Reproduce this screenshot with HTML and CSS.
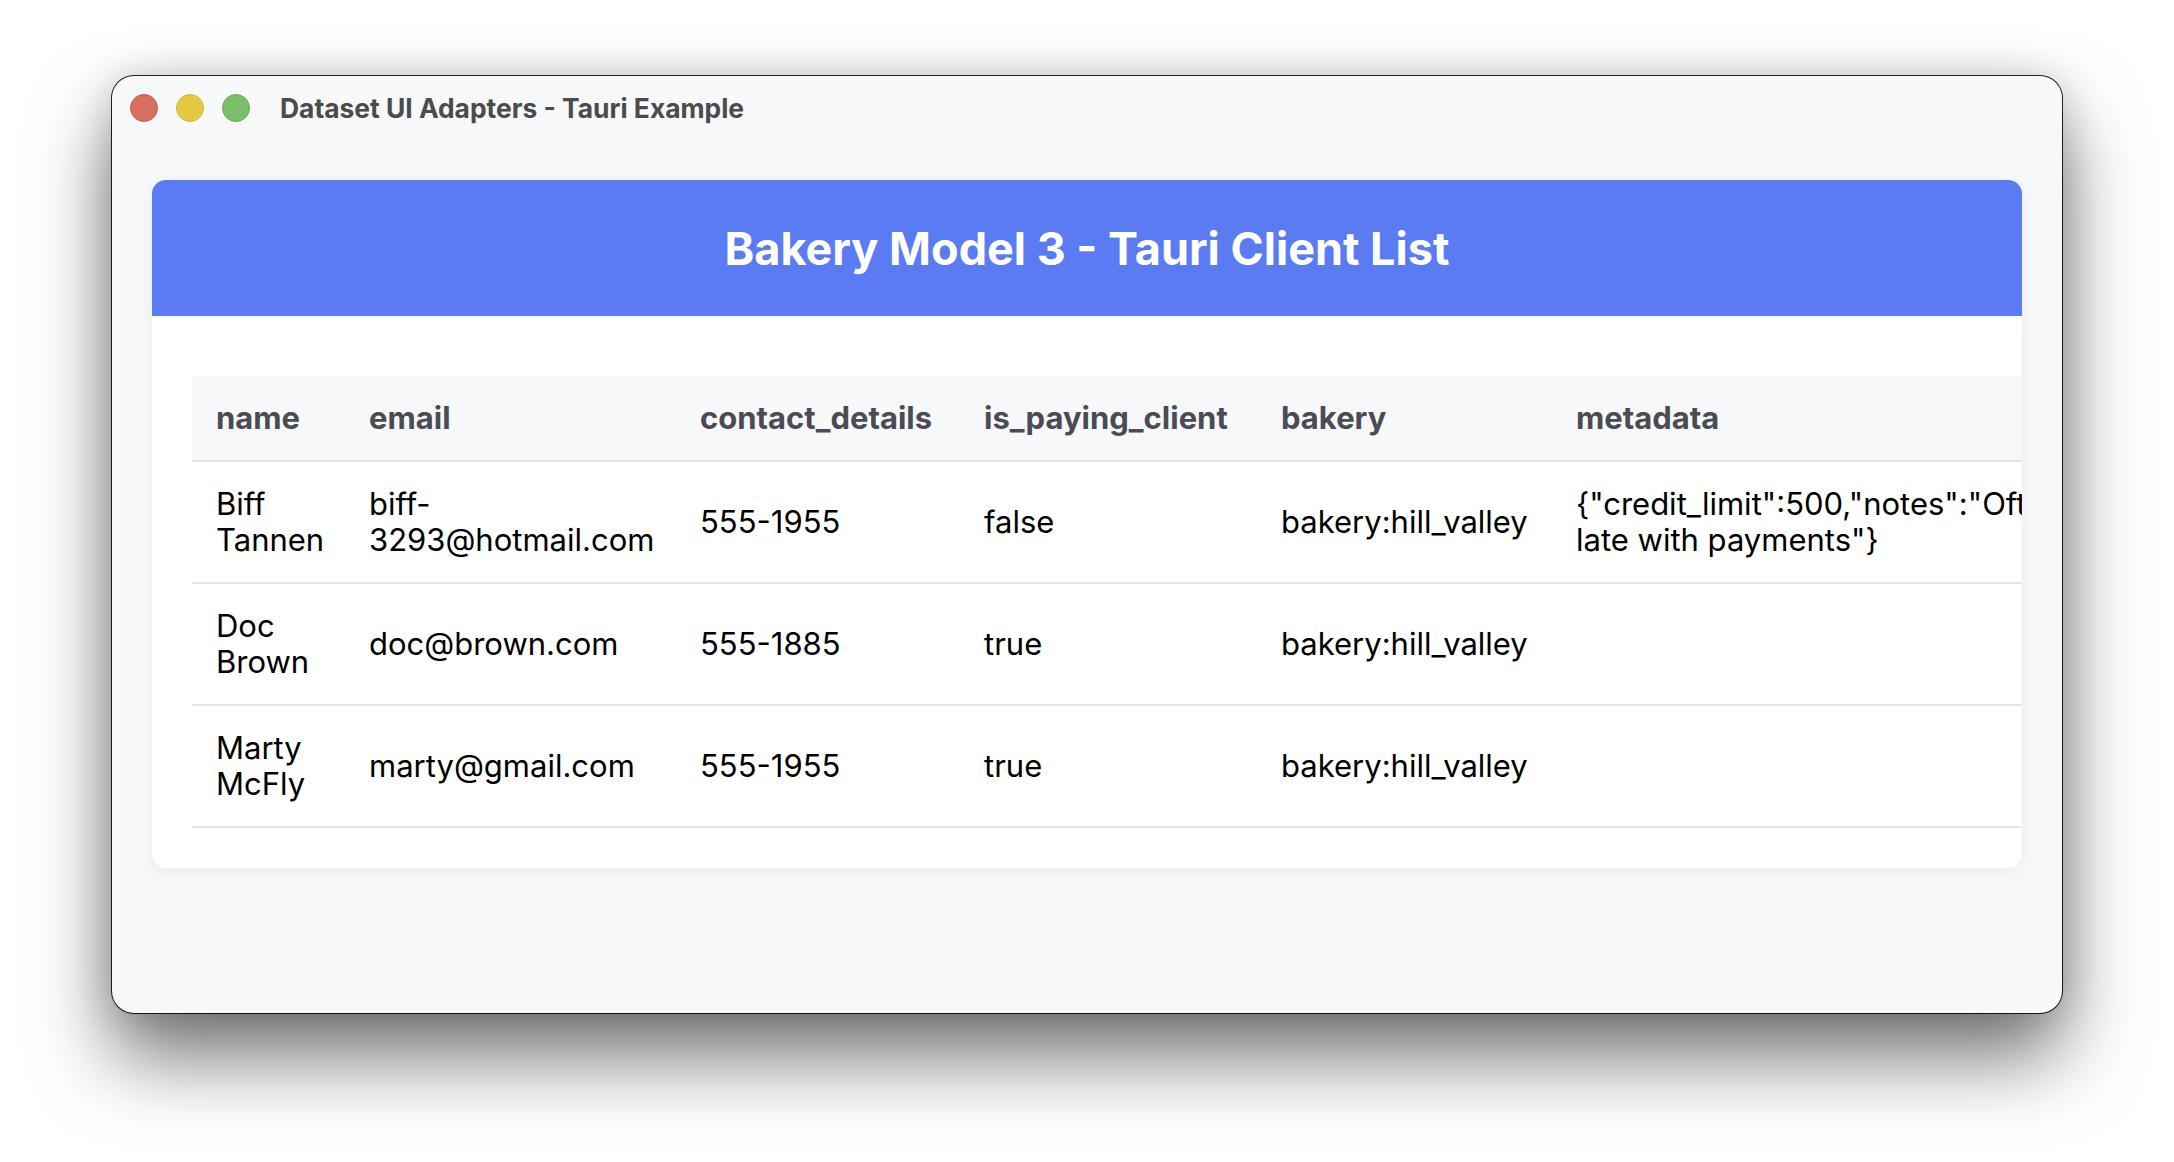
FILE: index.html
```html
<!DOCTYPE html>
<html>
<head>
<meta charset="utf-8">
<title>Dataset UI Adapters - Tauri Example</title>
<link rel="stylesheet" href="styles.css">
</head>
<body>
<div class="stage">
<div class="window">
  <div class="titlebar">
    <div class="lights">
      <span class="light red"></span>
      <span class="light yellow"></span>
      <span class="light green"></span>
    </div>
    <div class="wtitle">Dataset UI Adapters - Tauri Example</div>
  </div>
  <div class="content">
    <div class="card">
      <div class="card-head"><h1>Bakery Model 3 - Tauri Client List</h1></div>
      <div class="card-body">
        <table>
          <colgroup>
            <col class="c-name">
            <col class="c-email">
            <col class="c-contact">
            <col class="c-paying">
            <col class="c-bakery">
            <col class="c-meta">
          </colgroup>
          <thead>
            <tr><th>name</th><th>email</th><th>contact_details</th><th>is_paying_client</th><th>bakery</th><th>metadata</th></tr>
          </thead>
          <tbody>
            <tr><td>Biff Tannen</td><td>biff-3293@hotmail.com</td><td>555-1955</td><td>false</td><td>bakery:hill_valley</td><td>{"credit_limit":500,"notes":"Often late with payments"}</td></tr>
            <tr><td>Doc Brown</td><td>doc@brown.com</td><td>555-1885</td><td>true</td><td>bakery:hill_valley</td><td></td></tr>
            <tr><td>Marty McFly</td><td>marty@gmail.com</td><td>555-1955</td><td>true</td><td>bakery:hill_valley</td><td></td></tr>
          </tbody>
        </table>
      </div>
    </div>
  </div>
</div>
</div>
</body>
</html>
```

FILE: styles.css
```css
html, body {
  margin: 0;
  padding: 0;
  background: #ffffff;
}
body {
  font-family: Inter, "Noto Sans", "Liberation Sans", sans-serif;
}
.stage {
  box-sizing: border-box;
  width: 2174px;
  height: 1162px;
  padding: 76px 0 0 112px;
  overflow: hidden;
}
.window {
  width: 1950px;
  height: 937px;
  border-radius: 22px;
  background: #f7f8fa;
  overflow: hidden;
  box-shadow: 0 0 0 1px rgba(0, 0, 0, 0.85), 0 44px 80px rgba(0, 0, 0, 0.55), 0 0 40px rgba(0, 0, 0, 0.16);
}
.titlebar {
  height: 64px;
  display: flex;
  align-items: center;
  padding-left: 18px;
}
.lights {
  display: flex;
  gap: 18px;
}
.light {
  width: 26px;
  height: 26px;
  border-radius: 50%;
  border: 1px solid transparent;
}
.red { background: #d9705f; border-color: #c95a4a; }
.yellow { background: #e6c943; border-color: #d4b330; }
.green { background: #7bbf69; border-color: #62aa52; }
.wtitle {
  margin-left: 30px;
  font-size: 26.4px;
  font-weight: 700;
  color: #4b4b4b;
}
.content {
  padding: 40px;
}
.card {
  background: #ffffff;
  border-radius: 14px;
  overflow: hidden;
  box-shadow: 0 4px 18px rgba(0, 0, 0, 0.06);
}
.card-head {
  height: 136px;
  background: #5b7bf3;
  display: flex;
  align-items: center;
  justify-content: center;
}
.card-head h1 {
  margin: 0;
  color: #ffffff;
  font-size: 45px;
  font-weight: 700;
}
.card-body {
  padding: 60px 0 40px 40px;
}
table {
  border-collapse: collapse;
  table-layout: fixed;
  width: 1928px;
}
.c-name { width: 153px; }
.c-email { width: 331px; }
.c-contact { width: 284px; }
.c-paying { width: 297px; }
.c-bakery { width: 295px; }
.c-meta { width: 568px; }
th, td {
  padding: 24px;
  text-align: left;
  font-size: 31px;
  line-height: 36px;
  border-bottom: 2px solid #e4e5e9;
  vertical-align: middle;
}
th {
  background: #f7f8fa;
  color: #4a4b53;
  font-weight: 700;
}
td {
  color: #000000;
  font-weight: 400;
}
```
